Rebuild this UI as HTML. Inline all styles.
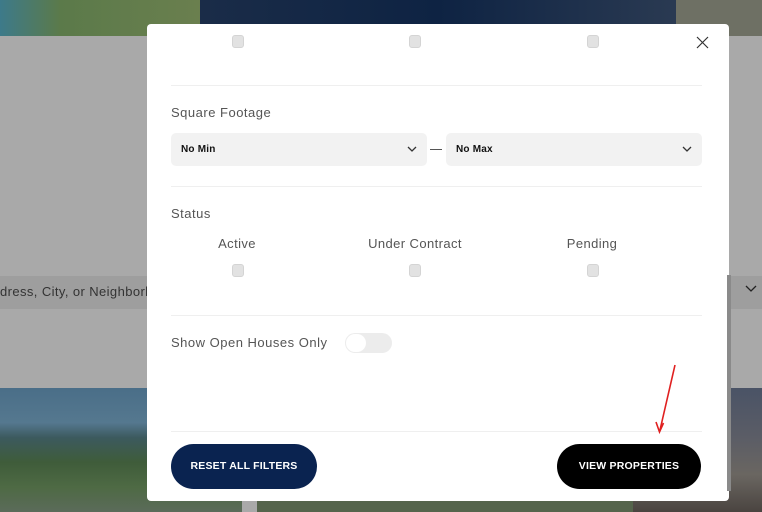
<!DOCTYPE html>
<html><head><style>
*{margin:0;padding:0;box-sizing:border-box}
body{width:762px;height:512px;overflow:hidden;position:relative;background:#a9a9a9;font-family:"Liberation Sans",sans-serif;color:#444}
.a{position:absolute}
.cb{position:absolute;width:12px;height:13px;background:#e2e2e2;border:1px solid #d4d4d4;border-radius:3px}
.hr{position:absolute;left:24px;width:531px;height:1px;background:#efefef}
.sel{position:absolute;top:109px;height:33px;width:256px;background:#f2f2f2;border-radius:5px;font-size:10px;font-weight:bold;color:#111;padding:11px 10px;letter-spacing:0.2px}
.lbl{position:absolute;font-size:13px;color:#555;transform:translateX(-50%);letter-spacing:0.4px}
.t{position:absolute;font-size:13px;color:#555;letter-spacing:0.5px}
.btn{position:absolute;top:420px;height:45px;border-radius:23px;color:#fff;font-weight:bold;font-size:10.5px;text-align:center;line-height:45px;letter-spacing:0.2px}
</style></head><body>
<div class="a" style="left:0;top:0;width:200px;height:36px;background:linear-gradient(90deg,#3d7a8a,#5b7a4a 30%,#6a7f4e)"></div>
<div class="a" style="left:200px;top:0;width:476px;height:36px;background:linear-gradient(90deg,#1a2c48,#0e2343 50%,#2a3a52)"></div>
<div class="a" style="left:676px;top:0;width:86px;height:36px;background:#6e7064"></div>
<div class="a" style="left:0;top:276px;width:762px;height:33px;background:#9e9e9e"></div>
<div class="a" style="left:0;top:284px;font-size:13px;color:#333;letter-spacing:0.4px">dress, City, or Neighborhood</div>
<svg class="a" style="left:745px;top:285px" width="12" height="8"><path d="M1 1l5 5 5-5" stroke="#222" stroke-width="1.3" fill="none"/></svg>
<div class="a" style="left:0;top:388px;width:242px;height:124px;background:linear-gradient(180deg,#4a6e88 0,#55788f 28%,#3c5a5e 40%,#3f5c3a 60%,#4e6a44 80%,#5b6b5a)"></div>
<div class="a" style="left:257px;top:388px;width:376px;height:124px;background:#55644c"></div>
<div class="a" style="left:633px;top:388px;width:129px;height:124px;background:linear-gradient(180deg,#4a5366,#5b5d66 40%,#6a6661 70%,#4a4440)"></div>
<div class="a" style="left:147px;top:24px;width:582px;height:477px;background:#fff;border-radius:4px">
<div class="cb" style="left:85px;top:11px"></div>
<div class="cb" style="left:262px;top:11px"></div>
<div class="cb" style="left:440px;top:11px"></div>
<svg class="a" style="left:549px;top:12px" width="13" height="13"><path d="M1 1l11 11M12 1L1 12" stroke="#333" stroke-width="1.2"/></svg>
<div class="hr" style="top:61px"></div>
<div class="t" style="left:24px;top:81px">Square Footage</div>
<div class="sel" style="left:24px">No Min<svg class="a" style="right:10px;top:13px" width="10" height="7"><path d="M1 1l4 4 4-4" stroke="#333" stroke-width="1.3" fill="none"/></svg></div>
<div class="a" style="left:283px;top:125px;width:12px;height:1px;background:#555"></div>
<div class="sel" style="left:299px">No Max<svg class="a" style="right:10px;top:13px" width="10" height="7"><path d="M1 1l4 4 4-4" stroke="#333" stroke-width="1.3" fill="none"/></svg></div>
<div class="hr" style="top:162px"></div>
<div class="t" style="left:24px;top:182px">Status</div>
<div class="lbl" style="left:90px;top:212px">Active</div>
<div class="lbl" style="left:268px;top:212px">Under Contract</div>
<div class="lbl" style="left:445px;top:212px">Pending</div>
<div class="cb" style="left:85px;top:240px"></div>
<div class="cb" style="left:262px;top:240px"></div>
<div class="cb" style="left:440px;top:240px"></div>
<div class="hr" style="top:291px"></div>
<div class="t" style="left:24px;top:311px">Show Open Houses Only</div>
<div class="a" style="left:198px;top:309px;width:47px;height:20px;background:#ececec;border-radius:10px"><div class="a" style="left:1px;top:1px;width:20px;height:18px;background:#fff;border-radius:9px"></div></div>
<div class="hr" style="top:407px"></div>
<div class="btn" style="left:24px;width:146px;background:#0a2350">RESET ALL FILTERS</div>
<div class="btn" style="left:410px;width:144px;background:#000">VIEW PROPERTIES</div>
</div>
<div class="a" style="left:727px;top:275px;width:4px;height:216px;background:#8a8a8a"></div>
<svg class="a" style="left:650px;top:362px" width="30" height="74"><path d="M25 3L10 68" stroke="#e02020" stroke-width="1.6"/><path d="M6 60l3.5 10 4-9" stroke="#e02020" stroke-width="1.6" fill="none"/></svg>
</body></html>
